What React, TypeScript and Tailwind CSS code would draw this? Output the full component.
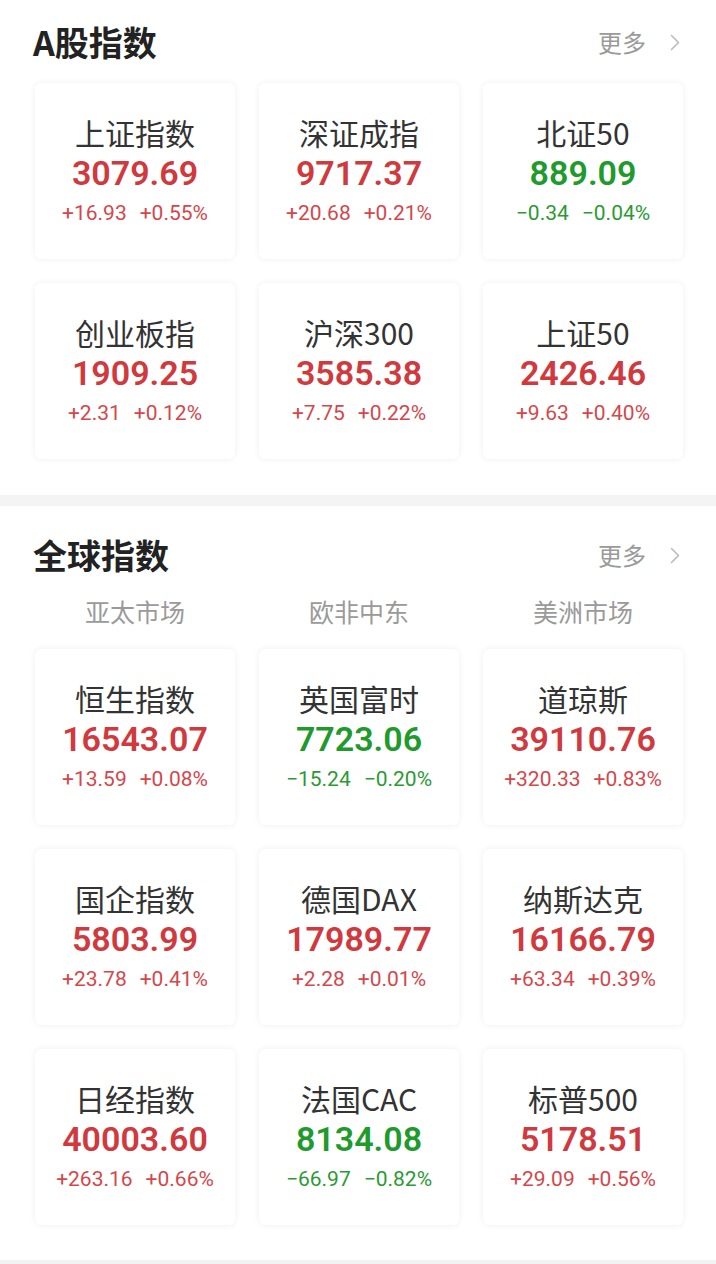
import React from 'react'

type Item = { name: string; value: string; chg: string; pct: string; up: boolean }

const aShares: Item[] = [
  { name: '上证指数', value: '3079.69', chg: '+16.93', pct: '+0.55%', up: true },
  { name: '深证成指', value: '9717.37', chg: '+20.68', pct: '+0.21%', up: true },
  { name: '北证50', value: '889.09', chg: '-0.34', pct: '-0.04%', up: false },
  { name: '创业板指', value: '1909.25', chg: '+2.31', pct: '+0.12%', up: true },
  { name: '沪深300', value: '3585.38', chg: '+7.75', pct: '+0.22%', up: true },
  { name: '上证50', value: '2426.46', chg: '+9.63', pct: '+0.40%', up: true },
]

const globalIdx: Item[] = [
  { name: '恒生指数', value: '16543.07', chg: '+13.59', pct: '+0.08%', up: true },
  { name: '英国富时', value: '7723.06', chg: '-15.24', pct: '-0.20%', up: false },
  { name: '道琼斯', value: '39110.76', chg: '+320.33', pct: '+0.83%', up: true },
  { name: '国企指数', value: '5803.99', chg: '+23.78', pct: '+0.41%', up: true },
  { name: '德国DAX', value: '17989.77', chg: '+2.28', pct: '+0.01%', up: true },
  { name: '纳斯达克', value: '16166.79', chg: '+63.34', pct: '+0.39%', up: true },
  { name: '日经指数', value: '40003.60', chg: '+263.16', pct: '+0.66%', up: true },
  { name: '法国CAC', value: '8134.08', chg: '-66.97', pct: '-0.82%', up: false },
  { name: '标普500', value: '5178.51', chg: '+29.09', pct: '+0.56%', up: true },
]

function Card({ it }: { it: Item }) {
  return (
    <div className="h-[176px] rounded-md bg-white shadow-[0_0_6px_rgba(0,0,0,0.07)] flex flex-col items-center pt-[29px]">
      <div className="text-[30px] leading-[40px] text-[#333]">{it.name}</div>
      <div className={`text-[34px] leading-[43px] font-semibold ${it.up ? 'text-[#d0393d]' : 'text-[#1f9a2d]'}`} style={{ fontFamily: 'Roboto, "Noto Sans", sans-serif' }}>
        {it.value}
      </div>
      <div className={`flex gap-[13px] text-[21px] leading-[36px] ${it.up ? 'text-[#d4474b]' : 'text-[#2a9a35]'}`} style={{ fontFamily: 'Roboto, "Noto Sans", sans-serif' }}>
        <span>{it.chg.replace('-', '−')}</span>
        <span>{it.pct.replace('-', '−')}</span>
      </div>
    </div>
  )
}

function Header({ title }: { title: string }) {
  return (
    <div className="flex items-center justify-between h-10">
      <h1 className="text-[34px] font-bold text-[#222] leading-10">{title}</h1>
      <div className="flex items-center gap-[24px] pr-[3px] text-[24px] text-[#9a9a9a]">
        <span>更多</span>
        <svg width="10" height="17" viewBox="0 0 10 17" fill="none">
          <path d="M1.5 1.5 L8.5 8.5 L1.5 15.5" stroke="#bcbcbc" strokeWidth="1.6" strokeLinecap="round" strokeLinejoin="round" />
        </svg>
      </div>
    </div>
  )
}

export default function App() {
  return (
    <div className="w-[716px] h-[1264px] bg-white overflow-hidden" style={{ fontFamily: '"Noto Sans CJK SC", "Noto Sans", sans-serif' }}>
      <div className="pt-[22px] pb-[36px] pl-[33px] pr-[33px]">
        <Header title="A股指数" />
        <div className="mt-[21px] grid grid-cols-3 gap-[24px] pl-[2px]">
          {aShares.map((it) => (
            <Card key={it.name} it={it} />
          ))}
        </div>
      </div>
      <div className="h-[11px] bg-[#f4f4f4]"></div>
      <div className="pt-[29px] pl-[33px] pr-[33px]">
        <Header title="全球指数" />
        <div className="mt-[20px] grid grid-cols-3 gap-[24px] pl-[2px] text-[25px] leading-8 text-[#9a9a9a] text-center">
          <span>亚太市场</span>
          <span>欧非中东</span>
          <span>美洲市场</span>
        </div>
        <div className="mt-[22px] grid grid-cols-3 gap-[24px] pl-[2px]">
          {globalIdx.map((it) => (
            <Card key={it.name} it={it} />
          ))}
        </div>
      </div>
      <div className="mt-[35px] h-[4px] bg-[#f2f2f2]"></div>
    </div>
  )
}
